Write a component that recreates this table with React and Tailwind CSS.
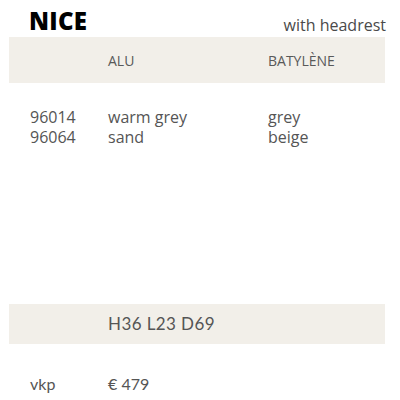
export default function App() {
  return (
    <div className="w-[400px] h-[400px] bg-white relative overflow-hidden" style={{ fontFamily: '"Open Sans", "Noto Sans", sans-serif' }}>
      <div className="flex items-end justify-between pl-[29px] pr-[14px] h-[37px] pb-[4px]">
        <div className="text-[24px] font-extrabold text-black leading-none tracking-[0.3px]">NICE</div>
        <div className="text-[16px] text-[#4a4a4a] leading-none">with headrest</div>
      </div>
      <div className="mx-[9px] w-[376px] h-[46px] bg-[#f2efe9] flex items-center text-[14px] text-[#595959]">
        <div className="w-[99px]" />
        <div className="w-[160px]">ALU</div>
        <div>BATYLÈNE</div>
      </div>
      <div className="pl-[30px] pt-[24px] text-[16px] text-[#555] leading-[20px]">
        <div className="flex">
          <div className="w-[78px]">96014</div>
          <div className="w-[160px]">warm grey</div>
          <div>grey</div>
        </div>
        <div className="flex">
          <div className="w-[78px]">96064</div>
          <div className="w-[160px]">sand</div>
          <div>beige</div>
        </div>
      </div>
      <div className="mx-[9px] mt-[157px] w-[376px] h-[40px] bg-[#f2efe9] flex items-center text-[17px] text-[#555]" style={{ fontFamily: 'Lato, sans-serif' }}>
        <div className="w-[99px]" />
        <div className="tracking-[0.4px]">H36 L23 D69</div>
      </div>
      <div className="flex pl-[30px] mt-[29px] text-[16px] text-[#555] leading-[22px]" style={{ fontFamily: 'Lato, sans-serif' }}>
        <div className="w-[78px]">vkp</div>
        <div>€ 479</div>
      </div>
    </div>
  );
}
